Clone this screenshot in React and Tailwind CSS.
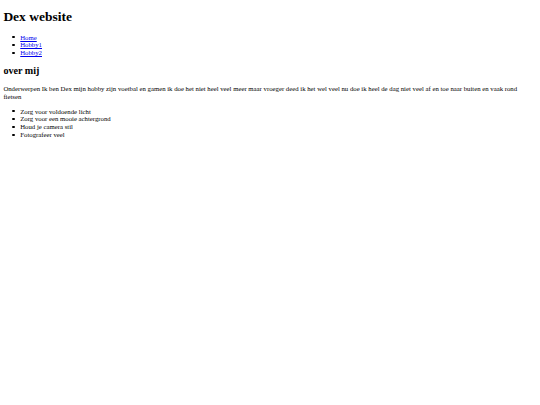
const links = ["Home", "Hobby1", "Hobby2"];

const tips = [
  "Zorg voor voldoende licht",
  "Zorg voor een mooie achtergrond",
  "Houd je camera stil",
  "Fotografeer veel",
];

// kleine bolletjes, zoals de standaard lijst van de browser
const Bullet = () => <span className="w-[2.2px] h-[2.2px] rounded-full bg-black mr-[5.6px] shrink-0" />;

export default function App() {
  return (
    <div className="min-h-[405px] bg-white text-black px-[3.375px] py-px font-['Liberation_Serif','Times_New_Roman',serif] text-[6.75px] leading-[7.76px]">
      <h1 className="mt-[8px] mb-[9px] text-[13.5px] leading-[15.5px] font-bold">Dex website</h1>

      <ul className="pl-[9.1px] my-[6.75px]">
        {links.map((item) => (
          <li key={item} className="flex items-center">
            <Bullet />
            <a href="#" className="text-[#0000ee] underline">
              {item}
            </a>
          </li>
        ))}
      </ul>

      <h2 className="mt-[8.4px] mb-[8.4px] text-[10.125px] leading-[11.64px] font-bold">over mij</h2>

      <p className="my-[6.75px]">
        Onderwerpen Ik ben Dex mijn hobby zijn voetbal en gamen ik doe het niet heel veel meer maar vroeger deed ik het wel veel nu doe ik heel de dag niet veel af en toe naar buiten en vaak rond fietsen
      </p>

      <ul className="pl-[9.1px] my-[6.75px]">
        {tips.map((tip) => (
          <li key={tip} className="flex items-center">
            <Bullet />
            {tip}
          </li>
        ))}
      </ul>
    </div>
  );
}
